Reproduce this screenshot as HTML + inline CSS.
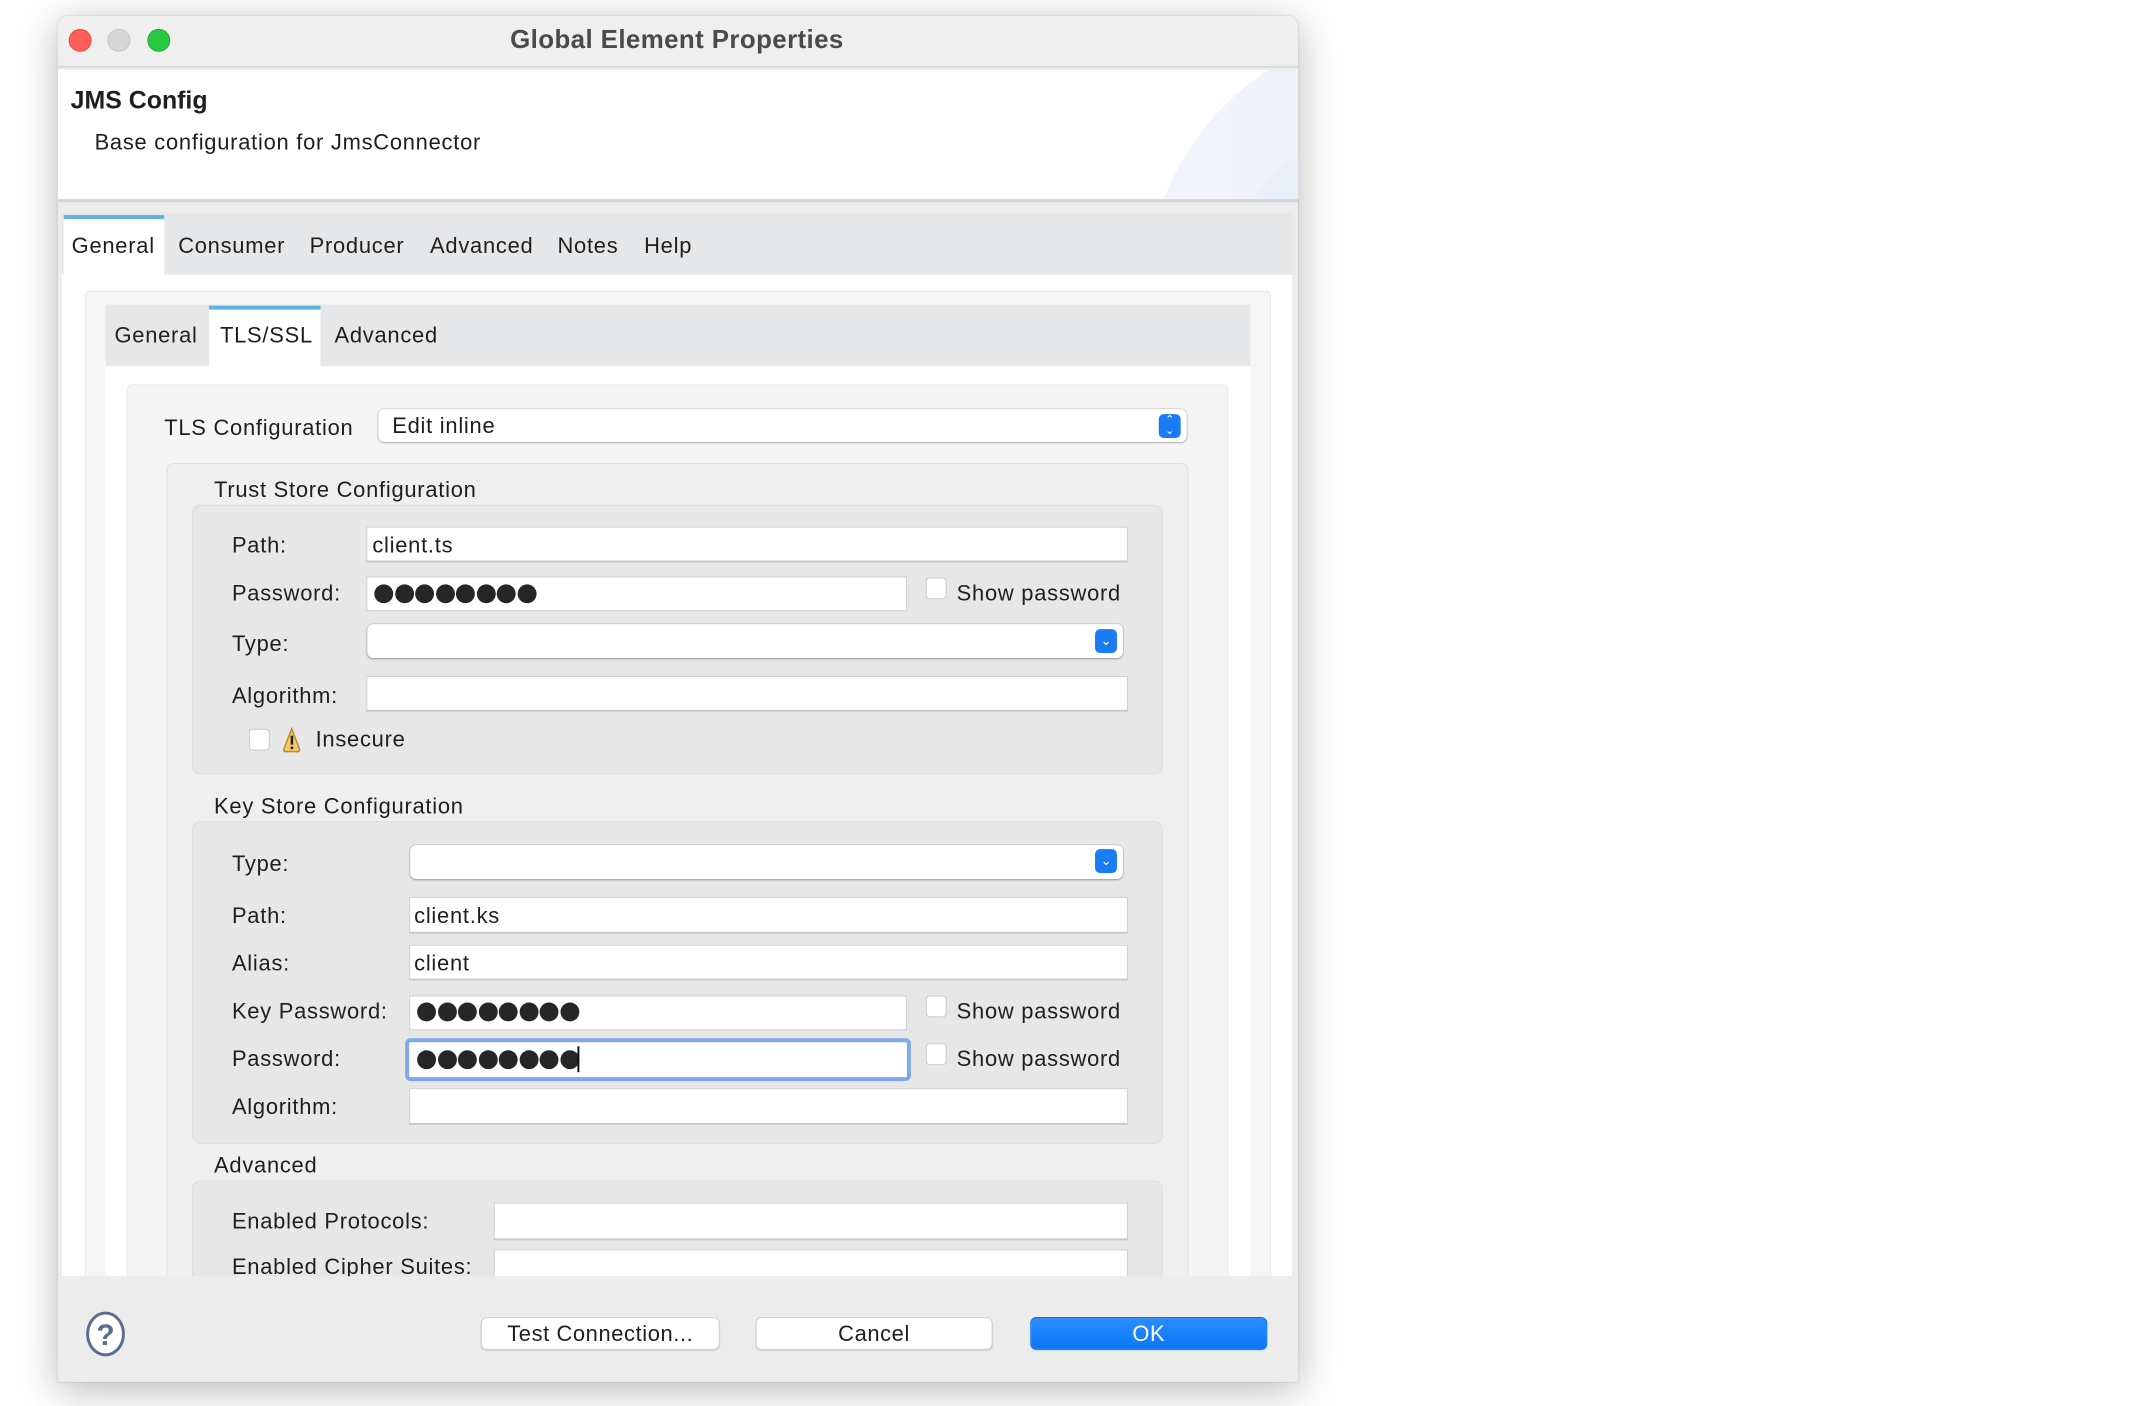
<!DOCTYPE html>
<html><head><meta charset="utf-8"><style>
*{box-sizing:border-box;margin:0;padding:0}
body{width:2142px;height:1406px;background:#fff;position:relative;overflow:hidden;font-family:"Liberation Sans",sans-serif;color:#1e1e1e}
#w{position:absolute;left:0;top:0;width:2142px;height:1406px;transform:scale(0.9955);transform-origin:0 0}
.a{position:absolute}
.t{position:absolute;font-size:22px;letter-spacing:0.75px;line-height:24px;white-space:nowrap}
.win{left:58px;top:16px;width:1246px;height:1372px;background:#ececec;box-shadow:0 8px 40px rgba(0,0,0,.28),0 0 0 1px rgba(0,0,0,.08);border-radius:10px 10px 0 0;overflow:hidden}
.inp{position:absolute;background:#fff;border:1px solid #cfcfcf;border-bottom:2px solid #c8c8c8}
.cb{position:absolute;width:21px;height:22px;background:#fff;border:1px solid #c9c9c9;border-radius:4px}
.dots span{display:inline-block;width:19px;height:19px;border-radius:50%;background:#262626;margin-right:1.5px}
.btn{position:absolute;height:33px;background:#fff;border:1px solid #cfcfcf;border-radius:6px;font-size:22px;letter-spacing:0.6px;text-align:center;line-height:31px;box-shadow:0 1px 1px rgba(0,0,0,.12)}
.sel{position:absolute;background:#fff;border-radius:6px;box-shadow:0 0 0 1px rgba(0,0,0,.1),0 1px 2px rgba(0,0,0,.2)}
.bb{position:absolute;width:22px;height:24px;background:#1a7cf5;border-radius:5px;color:#fff;font-size:13px;text-align:center;line-height:24px}
</style></head><body><div id="w">
<div class="a win"></div>
<div class="a" style="left:58px;top:16px;width:1246px;height:52px;background:#efefef;border-bottom:2px solid #d6d6d6;border-radius:10px 10px 0 0"></div>
<div class="a" style="left:69px;top:29px;width:23px;height:23px;border-radius:50%;background:#fe5f57;border:1px solid #e1483f"></div>
<div class="a" style="left:108px;top:29px;width:23px;height:23px;border-radius:50%;background:#d6d6d6;border:1px solid #c4c4c4"></div>
<div class="a" style="left:148px;top:29px;width:23px;height:23px;border-radius:50%;background:#28c840;border:1px solid #1eaa2f"></div>
<div class="t" style="left:0;width:1360px;text-align:center;top:24px;font-size:26px;letter-spacing:0.4px;line-height:30px;font-weight:bold;color:#4a4a4a">Global Element Properties</div>
<div class="a" style="left:58px;top:70px;width:1246px;height:130px;background:#fff;overflow:hidden">
 <div class="a" style="left:1090px;top:-40px;width:520px;height:560px;border-radius:50%;background:linear-gradient(90deg,#f3f5fb,#e6ebf8)"></div>
 <div class="a" style="left:1160px;top:50px;width:400px;height:400px;border-radius:50%;background:linear-gradient(90deg,#eef1fa,#d8e1f5)"></div>
</div>
<div class="a" style="left:58px;top:200px;width:1246px;height:3px;background:#d4d4d4"></div>
<div class="t" style="left:71px;top:86px;font-size:25px;letter-spacing:0;line-height:30px;font-weight:bold">JMS Config</div>
<div class="t" style="left:95px;top:131px">Base configuration for JmsConnector</div>
<div class="a" style="left:62px;top:214px;width:1236px;height:62px;background:#e6e7e9"></div>
<div class="a" style="left:64px;top:216px;width:101px;height:62px;background:#fff;border-top:4px solid #60b3de"></div>
<div class="t" style="left:72px;top:235px">General</div>
<div class="t" style="left:179px;top:235px">Consumer</div>
<div class="t" style="left:311px;top:235px">Producer</div>
<div class="t" style="left:432px;top:235px">Advanced</div>
<div class="t" style="left:560px;top:235px">Notes</div>
<div class="t" style="left:647px;top:235px">Help</div>
<div class="a" style="left:62px;top:276px;width:1236px;height:1006px;background:#fff"></div>
<div class="a" style="left:85px;top:292px;width:1192px;height:990px;background:#f6f6f6;border:1px solid #e8e8e8;border-bottom:none;border-radius:6px 6px 0 0"></div>
<div class="a" style="left:106px;top:306px;width:1150px;height:62px;background:#e6e7e9"></div>
<div class="a" style="left:106px;top:368px;width:1150px;height:914px;background:#fff"></div>
<div class="a" style="left:210px;top:307px;width:112px;height:62px;background:#fff;border-top:4px solid #60b3de"></div>
<div class="t" style="left:115px;top:325px;color:#222">General</div>
<div class="t" style="left:221px;top:325px">TLS/SSL</div>
<div class="t" style="left:336px;top:325px">Advanced</div>
<div class="a" style="left:127px;top:386px;width:1107px;height:896px;background:#f5f5f5;border:1px solid #e6e6e6;border-bottom:none;border-radius:6px 6px 0 0"></div>
<div class="t" style="left:165px;top:418px">TLS Configuration</div>
<div class="sel" style="left:380px;top:411px;width:812px;height:33px"></div>
<div class="t" style="left:394px;top:416px">Edit inline</div>
<div class="bb" style="left:1164px;top:416px;font-size:11px;line-height:11px;padding-top:1px">&#8963;<br>&#8964;</div>
<div class="a" style="left:167px;top:465px;width:1027px;height:817px;background:#efefef;border:1px solid #e2e2e2;border-bottom:none;border-radius:8px 8px 0 0"></div>
<div class="t" style="left:215px;top:480px">Trust Store Configuration</div>
<div class="a" style="left:193px;top:507px;width:975px;height:271px;background:#e7e7e7;border:1px solid #dcdcdc;border-radius:8px"></div>
<div class="t" style="left:233px;top:536px">Path:</div>
<div class="inp" style="left:368px;top:529px;width:765px;height:36px"></div>
<div class="t" style="left:374px;top:536px">client.ts</div>
<div class="t" style="left:233px;top:584px">Password:</div>
<div class="inp" style="left:368px;top:579px;width:543px;height:35px;border-bottom-width:1px"></div>
<div class="a dots" style="left:376px;top:587px;height:19px;line-height:0"><span></span><span></span><span></span><span></span><span></span><span></span><span></span><span></span></div>
<div class="cb" style="left:930px;top:580px"></div>
<div class="t" style="left:961px;top:584px">Show password</div>
<div class="t" style="left:233px;top:635px">Type:</div>
<div class="sel" style="left:369px;top:627px;width:759px;height:34px"></div>
<div class="bb" style="left:1100px;top:632px">&#8964;</div>
<div class="t" style="left:233px;top:687px">Algorithm:</div>
<div class="inp" style="left:368px;top:679px;width:765px;height:36px"></div>
<div class="cb" style="left:250px;top:732px"></div>
<svg class="a" style="left:283px;top:730px" width="20" height="26" viewBox="0 0 20 26"><path d="M10 2 L18 23 Q18 25 16 25 L4 25 Q2 25 2 23 Z" fill="#f3c866" stroke="#b88a2a" stroke-width="1.5"/><rect x="9" y="9" width="2.5" height="9" fill="#222"/><rect x="9" y="20" width="2.5" height="2.5" fill="#222"/></svg>
<div class="t" style="left:317px;top:731px">Insecure</div>
<div class="t" style="left:215px;top:798px">Key Store Configuration</div>
<div class="a" style="left:193px;top:825px;width:975px;height:324px;background:#e7e7e7;border:1px solid #dcdcdc;border-radius:8px"></div>
<div class="t" style="left:233px;top:856px">Type:</div>
<div class="sel" style="left:412px;top:849px;width:716px;height:34px"></div>
<div class="bb" style="left:1100px;top:853px">&#8964;</div>
<div class="t" style="left:233px;top:908px">Path:</div>
<div class="inp" style="left:411px;top:901px;width:722px;height:37px"></div>
<div class="t" style="left:416px;top:908px">client.ks</div>
<div class="t" style="left:233px;top:956px">Alias:</div>
<div class="inp" style="left:411px;top:949px;width:722px;height:36px"></div>
<div class="t" style="left:416px;top:956px">client</div>
<div class="t" style="left:233px;top:1004px">Key Password:</div>
<div class="inp" style="left:411px;top:1000px;width:500px;height:35px;border-bottom-width:1px"></div>
<div class="a dots" style="left:419px;top:1007px;line-height:0"><span></span><span></span><span></span><span></span><span></span><span></span><span></span><span></span></div>
<div class="cb" style="left:930px;top:1000px"></div>
<div class="t" style="left:961px;top:1004px">Show password</div>
<div class="t" style="left:233px;top:1052px">Password:</div>
<div class="a" style="left:407px;top:1043px;width:508px;height:43px;border:4px solid #7ea9ea;border-radius:5px;background:#fff"></div>
<div class="a dots" style="left:419px;top:1055px;line-height:0"><span></span><span></span><span></span><span></span><span></span><span></span><span></span><span></span></div>
<div class="a" style="left:580px;top:1051px;width:2px;height:26px;background:#111"></div>
<div class="cb" style="left:930px;top:1048px"></div>
<div class="t" style="left:961px;top:1052px">Show password</div>
<div class="t" style="left:233px;top:1100px">Algorithm:</div>
<div class="inp" style="left:411px;top:1093px;width:722px;height:37px"></div>
<div class="t" style="left:215px;top:1159px">Advanced</div>
<div class="a" style="left:193px;top:1186px;width:975px;height:120px;background:#e7e7e7;border:1px solid #dcdcdc;border-radius:8px"></div>
<div class="t" style="left:233px;top:1215px">Enabled Protocols:</div>
<div class="inp" style="left:496px;top:1208px;width:637px;height:38px"></div>
<div class="t" style="left:233px;top:1261px">Enabled Cipher Suites:</div>
<div class="inp" style="left:496px;top:1255px;width:637px;height:38px"></div>
<div class="a" style="left:58px;top:1282px;width:1246px;height:106px;background:#ececec"></div>
<svg class="a" style="left:86px;top:1317px" width="40" height="46" viewBox="0 0 40 46"><ellipse cx="20" cy="23" rx="18" ry="21" fill="#fff" stroke="#5a6f8f" stroke-width="3"/><text x="20" y="34" font-family="Liberation Sans" font-size="30" font-weight="bold" fill="#5a6f8f" text-anchor="middle">?</text></svg>
<div class="btn" style="left:483px;top:1323px;width:240px">Test Connection...</div>
<div class="btn" style="left:759px;top:1323px;width:238px">Cancel</div>
<div class="btn" style="left:1035px;top:1323px;width:238px;background:linear-gradient(#2b8dff,#0a77f8);border-color:#0a72ee;color:#fff">OK</div>
</div></body></html>
